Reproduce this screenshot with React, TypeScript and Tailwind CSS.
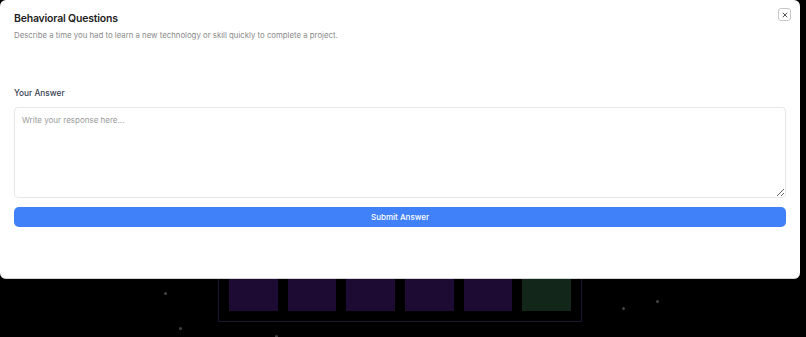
import React from 'react';

const dots = [
  { x: 165, y: 293, s: 3 },
  { x: 180, y: 328, s: 3 },
  { x: 276, y: 336, s: 3 },
  { x: 623, y: 308, s: 3 },
  { x: 657, y: 301, s: 3 },
];

const tiles = ['bg-[#1e0b33]', 'bg-[#1e0b33]', 'bg-[#1e0b33]', 'bg-[#1e0b33]', 'bg-[#1e0b33]', 'bg-[#12261a]'];

export default function App() {
  return (
    <div className="relative w-[806px] h-[337px] overflow-hidden bg-black" style={{ fontFamily: 'Inter, "Noto Sans", sans-serif' }}>
      {/* background board */}
      <div className="flex justify-center pt-[150px]">
        <div className="ml-[-6px] w-[364px] h-[172px] border border-[#1c1430] flex items-end gap-[10px] p-[10px]">
          {tiles.map((c, i) => (
            <div key={i} className={`w-[49px] h-[49px] ${c}`} />
          ))}
        </div>
      </div>

      {dots.map((d, i) => (
        <div
          key={i}
          className="absolute rounded-full bg-[#444]"
          style={{ left: d.x - 1, top: d.y - 1, width: d.s, height: d.s }}
        />
      ))}

      {/* modal */}
      <div className="absolute left-0 top-0 w-[800px] h-[279px] bg-white rounded-[6px] border-b border-[#d4d4d4] px-[14px]">
        <button className="absolute right-[9px] top-[8px] w-[13px] h-[13px] rounded-[3px] border border-[#c8c8c8] flex items-center justify-center text-[#555]">
          <svg width="8" height="8" viewBox="0 0 24 24" fill="none" stroke="currentColor" strokeWidth="3" strokeLinecap="round">
            <path d="M18 6 6 18" />
            <path d="m6 6 12 12" />
          </svg>
        </button>

        <h2 className="pt-[12px] text-[10.5px] leading-[14px] font-semibold tracking-[-0.2px] text-[#1f1f1f]">Behavioral Questions</h2>
        <p className="mt-[3px] text-[7.8px] leading-[12px] text-[#8a8a8a]">
          Describe a time you had to learn a new technology or skill quickly to complete a project.
        </p>

        <label className="block mt-[46px] text-[8.3px] leading-[12px] font-medium text-[#374151]">Your Answer</label>
        <textarea
          className="mt-[8px] block w-full h-[91px] rounded-[4px] border border-[#e5e7eb] px-[7px] py-[6px] text-[8px] leading-[12px] text-[#333] placeholder:text-[#9a9a9a] outline-none"
          placeholder="Write your response here..."
        />
        <button className="mt-[9px] w-full h-[20px] rounded-[5px] bg-[#4080f8] text-white text-[8px] font-medium">
          Submit Answer
        </button>
      </div>
    </div>
  );
}
